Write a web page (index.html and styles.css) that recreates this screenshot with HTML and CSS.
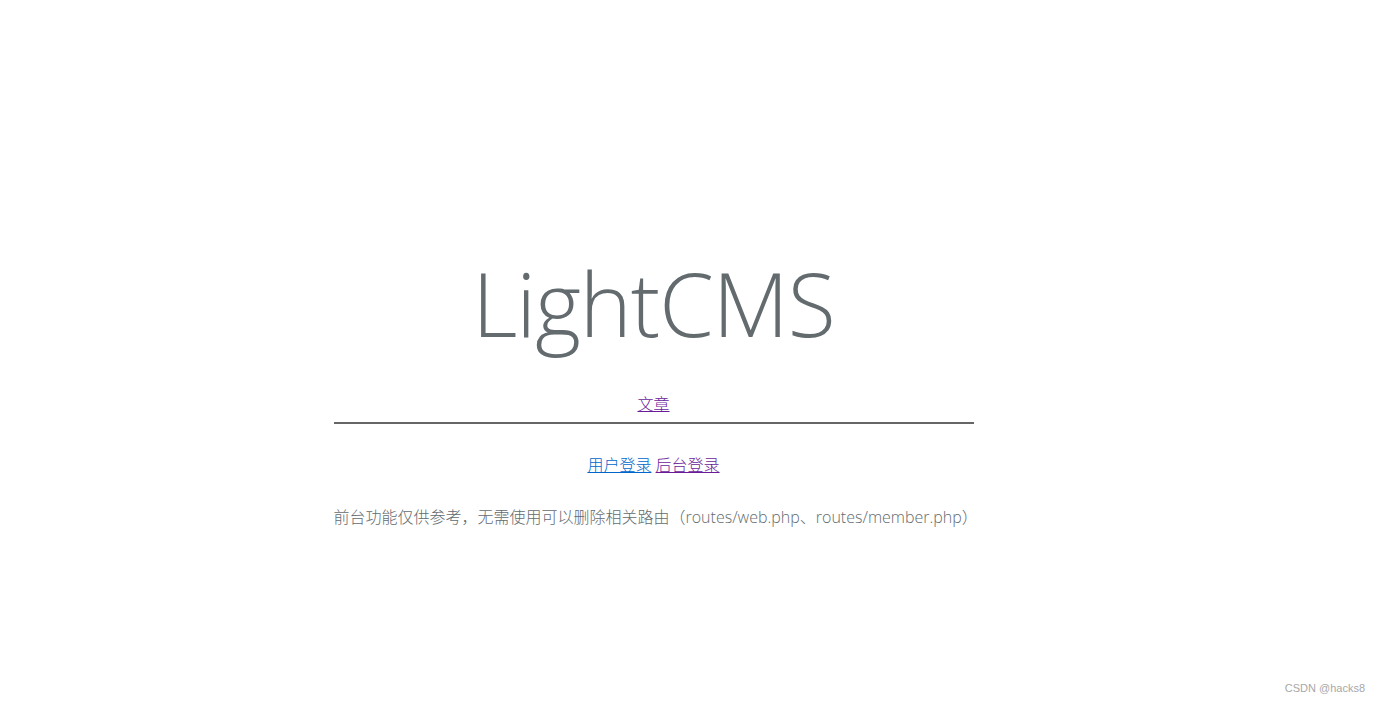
FILE: index.html
```html
<!DOCTYPE html>
<html lang="zh-CN">
<head>
<meta charset="utf-8">
<title>LightCMS</title>
<link rel="stylesheet" href="styles.css">
</head>
<body>
<div class="page">
  <div class="content">
    <div class="title">LightCMS</div>
    <div class="nav"><a class="visited" href="#">文章</a></div>
    <div class="links"><a class="link" href="#">用户登录</a> <a class="visited" href="#">后台登录</a></div>
    <div class="note">前台功能仅供参考，无需使用可以删除相关路由（routes/web.php、routes/member.php）</div>
  </div>
</div>
<div class="watermark">CSDN @hacks8</div>
</body>
</html>
```
FILE: styles.css
```css
html, body {
  margin: 0;
  padding: 0;
  background: #fff;
}
body {
  height: 702px;
  position: relative;
  font-family: "Open Sans", "Noto Sans CJK SC", sans-serif;
  color: #636b6f;
  font-weight: 300;
}
.page {
  width: 1307px;
  display: flex;
  justify-content: center;
  padding-top: 253px;
}
.content {
  width: 640px;
  text-align: center;
}
.title {
  font-size: 88px;
  line-height: 100px;
  font-weight: 300;
  letter-spacing: -1px;
}
.nav {
  margin-top: 41px;
  font-size: 16px;
  line-height: 20px;
  padding-bottom: 8px;
  border-bottom: 2px solid #666;
}
.links {
  margin-top: 31px;
  font-size: 16px;
  line-height: 20px;
}
.note {
  margin-top: 32px;
  font-size: 16px;
  line-height: 20px;
  text-align: left;
  white-space: nowrap;
}
a.link { color: #0066cc; }
a.visited { color: #6a1b9a; }
.watermark {
  position: absolute;
  right: 14px;
  bottom: 8px;
  font-family: "Liberation Sans", Arial, sans-serif;
  font-size: 11px;
  color: #a8a8a8;
  font-weight: 400;
}
```
